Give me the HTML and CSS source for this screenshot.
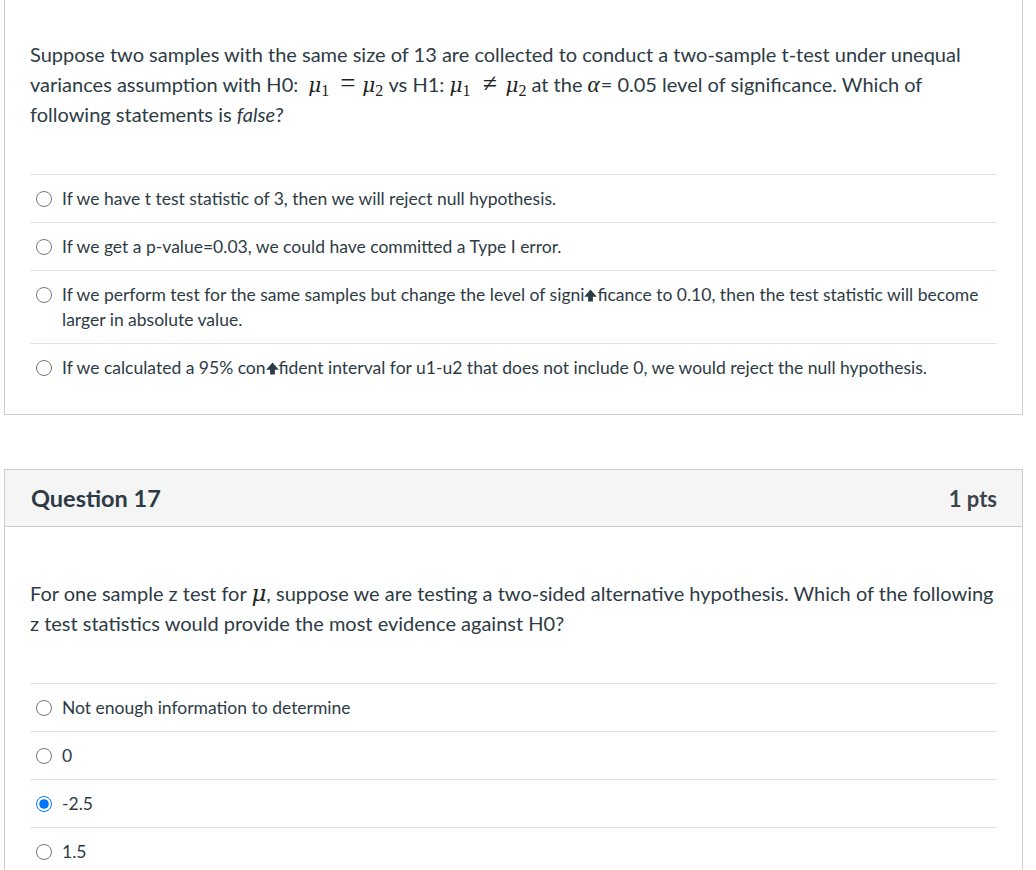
FILE: index.html
```html
<!DOCTYPE html>
<html>
<head>
<meta charset="utf-8">
<link rel="stylesheet" href="styles.css">
</head>
<body>
<div class="page">
  <div class="card card-first">
    <div class="qtext">
      Suppose two samples with the same size of 13 are collected to conduct a two-sample t-test under unequal variances assumption with H0: <span class="m m-lead"><i>μ</i><sub>1</sub><span class="op">=</span><i>μ</i><sub>2</sub></span> vs H1: <span class="m"><i>μ</i><sub>1</sub><span class="op op-ne">≠</span><i>μ</i><sub>2</sub></span> at the <span class="m"><i class="alpha">α</i></span>= 0.05 level of significance. Which of following statements is <em>false</em>?
    </div>
    <ul class="answers">
      <li><label><input type="radio" name="q16"><span>If we have t test statistic of 3, then we will reject null hypothesis.</span></label></li>
      <li><label><input type="radio" name="q16"><span>If we get a p-value=0.03, we could have committed a Type I error.</span></label></li>
      <li><label><input type="radio" name="q16"><span>If we perform test for the same samples but change the level of signi<svg class="glyph" viewBox="0 0 12 12" width="13" height="13"><path d="M6 0.5 L11.8 7.2 L8.2 7.2 L8.2 11.5 L3.8 11.5 L3.8 7.2 L0.2 7.2 Z" fill="#2d3b45"/></svg>ficance to 0.10, then the test statistic will become larger in absolute value.</span></label></li>
      <li><label><input type="radio" name="q16"><span>If we calculated a 95% con<svg class="glyph" viewBox="0 0 12 12" width="13" height="13"><path d="M6 0.5 L11.8 7.2 L8.2 7.2 L8.2 11.5 L3.8 11.5 L3.8 7.2 L0.2 7.2 Z" fill="#2d3b45"/></svg>fident interval for u1-u2 that does not include 0, we would reject the null hypothesis.</span></label></li>
    </ul>
  </div>

  <div class="card card-second">
    <div class="header">
      <h2 class="title">Question 17</h2>
      <span class="pts">1 pts</span>
    </div>
    <div class="qtext qtext2">
      For one sample z test for <span class="m m-big"><i>μ</i></span>, suppose we are testing a two-sided alternative hypothesis. Which of the following z test statistics would provide the most evidence against H0?
    </div>
    <ul class="answers">
      <li><label><input type="radio" name="q17"><span>Not enough information to determine</span></label></li>
      <li><label><input type="radio" name="q17"><span>0</span></label></li>
      <li><label><input type="radio" name="q17" checked><span>-2.5</span></label></li>
      <li><label><input type="radio" name="q17"><span>1.5</span></label></li>
    </ul>
  </div>
</div>
</body>
</html>
```
FILE: styles.css
```css
html, body {
  margin: 0;
  padding: 0;
  background: #ffffff;
}
body {
  font-family: Lato, "Open Sans", sans-serif;
  color: #2d3b45;
  overflow: hidden;
}
.page {
  padding: 0 13px 0 4px;
}
.card {
  border: 1px solid #c7cdd1;
  background: #fff;
}
.card-first {
  border-top: none;
  padding-top: 39px;
  padding-bottom: 23px;
}
.card-second {
  margin-top: 54px;
}
.qtext {
  padding: 0 25px 0 25px;
  font-size: 20px;
  line-height: 30px;
}
.qtext em {
  font-style: italic;
}
.m {
  font-family: "DejaVu Serif", "Liberation Serif", serif;
  font-size: 20px;
  white-space: nowrap;
  line-height: 0;
  color: #222;
}
.m-lead {
  margin-left: 5px;
}
.m i {
  font-style: italic;
}
.m .alpha {
  font-size: 23px;
  font-family: "Liberation Serif", serif;
  padding-right: 1px;
}
.m-big {
  font-size: 23px;
}
.m sub {
  font-family: "Liberation Serif", serif;
  font-size: 16px;
  vertical-align: -4px;
  line-height: 0;
  font-style: normal;
}
.m .op {
  display: inline-block;
  width: 33px;
  text-align: center;
  font-family: "Liberation Serif", serif;
  font-size: 27px;
  font-style: normal;
  position: relative;
  left: 2px;
}
.m .op-ne {
  width: 35px;
  font-size: 26px;
}
.answers {
  list-style: none;
  margin: 45px 25px 0 25px;
  padding: 0;
  border-top: 1px solid #dfe3e6;
}
.answers li {
  border-bottom: 1px solid #dfe3e6;
  padding: 11px 0 11px 0;
  font-size: 17.5px;
  line-height: 25px;
}
.answers li:last-child {
  border-bottom: none;
}
.answers label {
  display: flex;
  align-items: flex-start;
}
.answers input {
  margin: 5px 10px 0 6px;
  width: 16px;
  height: 16px;
  flex: none;
}
.answers span {
  flex: 1;
}
.glyph {
  vertical-align: -1px;
}
.header {
  background: #f5f5f5;
  border-bottom: 1px solid #c7cdd1;
  display: flex;
  justify-content: space-between;
  align-items: center;
  height: 56px;
  padding: 0 25px 0 26px;
}
.title {
  margin: 0;
  font-size: 23.5px;
  font-weight: 700;
}
.pts {
  font-size: 22px;
  font-weight: 700;
  color: #3d454c;
}
.qtext2 {
  margin-top: 51px;
}
.card-second .answers {
  margin-top: 45px;
}
```
